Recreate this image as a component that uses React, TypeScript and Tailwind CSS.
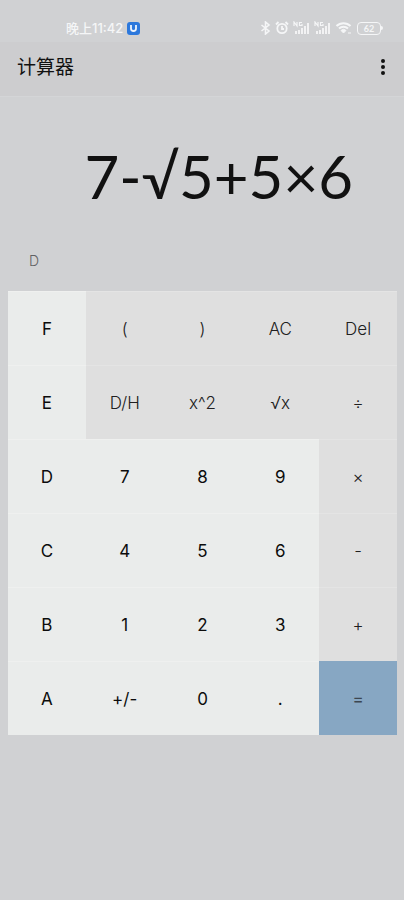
import React from 'react';

type Tone = 'light' | 'gray' | 'blue';
type Key = { label: string; tone: Tone };

const light = (label: string): Key => ({ label, tone: 'light' });
const gray = (label: string): Key => ({ label, tone: 'gray' });

const rows: Key[][] = [
  [light('F'), gray('('), gray(')'), gray('AC'), gray('Del')],
  [light('E'), gray('D/H'), gray('x^2'), gray('√x'), gray('÷')],
  [light('D'), light('7'), light('8'), light('9'), gray('×')],
  [light('C'), light('4'), light('5'), light('6'), gray('-')],
  [light('B'), light('1'), light('2'), light('3'), gray('+')],
  [light('A'), light('+/-'), light('0'), light('.'), { label: '=', tone: 'blue' }],
];

const tones: Record<Tone, string> = {
  light: 'bg-[#eaeceb] border-[#eff0ef] text-[#0c0c0c] font-normal',
  gray: 'bg-[#dfdfdf] border-[#e4e4e4] text-[#202020] font-light',
  blue: 'bg-[#87a7c3] border-[#87a7c3] text-[#3c4650]',
};

function Signal() {
  return (
    <svg width="17" height="14" viewBox="0 0 17 14" fill="none" stroke="currentColor" aria-hidden="true">
      <path d="M1 5V1l3 4V1M9 1.500H6.500v3H9V3" strokeWidth="1.200" />
      <path d="M3 13v-3M6 13V9M9 13V7M12 13V5M15 13V2" strokeWidth="1.800" />
    </svg>
  );
}

function StatusBar() {
  return (
    <div className="flex h-[42px] items-center justify-between pt-[14px] pr-[21px] pl-[66px] text-[#f5f6f7]">
      <div className="flex items-center gap-1">
        <span className="font-['Inter','Noto_Sans_CJK_SC',sans-serif] text-[13px] leading-4 font-medium">晚上11:42</span>
        <svg width="13" height="13" viewBox="0 0 13 13" aria-hidden="true">
          <rect width="13" height="13" rx="3" fill="#2c78dc" />
          <path d="M4 3v3.500a2.500 2.500 0 0 0 5 0V3" fill="none" stroke="#eef4fc" strokeWidth="1.800" />
        </svg>
      </div>
      <div className="flex items-center gap-1">
        <svg width="11" height="14" viewBox="0 0 11 14" fill="none" stroke="currentColor" strokeWidth="1.600" aria-hidden="true">
          <path d="M1.500 4l7.500 6-3.500 3V1L9 4l-7.500 6" />
        </svg>
        <svg width="14" height="14" viewBox="0 0 14 14" fill="none" stroke="currentColor" strokeWidth="1.800" aria-hidden="true">
          <circle cx="7" cy="7.500" r="4.700" />
          <path d="M7 5v3h2M1 3.500L3.500 1M13 3.500L10.500 1" />
        </svg>
        <Signal />
        <Signal />
        <svg width="18" height="14" viewBox="0 0 18 14" fill="none" stroke="currentColor" strokeWidth="2" aria-hidden="true">
          <path d="M1.500 5a10 10 0 0 1 14 0M4 7.500a6.500 6.500 0 0 1 9 0" />
          <path d="M6 9.500a3.500 3.500 0 0 1 5 0L8.500 12zM13 12h3" fill="currentColor" strokeWidth="1" />
        </svg>
        <div className="flex items-center">
          <span className="flex h-[13px] w-6 items-center justify-center rounded-[4px] border border-current text-[9px] leading-none font-bold">
            62
          </span>
          <span className="h-1 w-[2px] rounded-r bg-current" />
        </div>
      </div>
    </div>
  );
}

export default function App() {
  return (
    <main className="flex min-h-screen flex-col bg-[#d0d1d3] font-['Lato','Noto_Sans_CJK_SC',sans-serif] text-[#111]">
      <StatusBar />
      <header className="flex h-[55px] items-center justify-between border-b border-[#d4d5d7] bg-[#cdcdcf] pr-[12px] pb-1 pl-[17px]">
        <h1 className="text-[19px] leading-7 font-normal">计算器</h1>
        <button type="button" aria-label="菜单" className="flex h-8 w-[18px] items-center justify-center">
          <svg width="4" height="16" viewBox="0 0 4 16" fill="currentColor" aria-hidden="true">
            <circle cx="2" cy="2" r="2" />
            <circle cx="2" cy="8" r="2" />
            <circle cx="2" cy="14" r="2" />
          </svg>
        </button>
      </header>
      <output className="block pt-[39px] pr-[51px] text-right text-[60px] leading-[80px] whitespace-nowrap">
        7-√5+5×6
      </output>
      <p className="pt-[35px] pl-[29px] font-['Inter',sans-serif] text-[14px] leading-5 font-light text-[#606163]">D</p>
      <div className="mt-5 mr-[7px] ml-2 grid grid-cols-5 font-['Inter',sans-serif]">
        {rows.flat().map((key) => (
          <button
            key={key.label}
            type="button"
            className={`flex h-[74px] items-center justify-center border-t text-[17px] leading-6 ${tones[key.tone]}`}
          >
            {key.label}
          </button>
        ))}
      </div>
    </main>
  );
}
